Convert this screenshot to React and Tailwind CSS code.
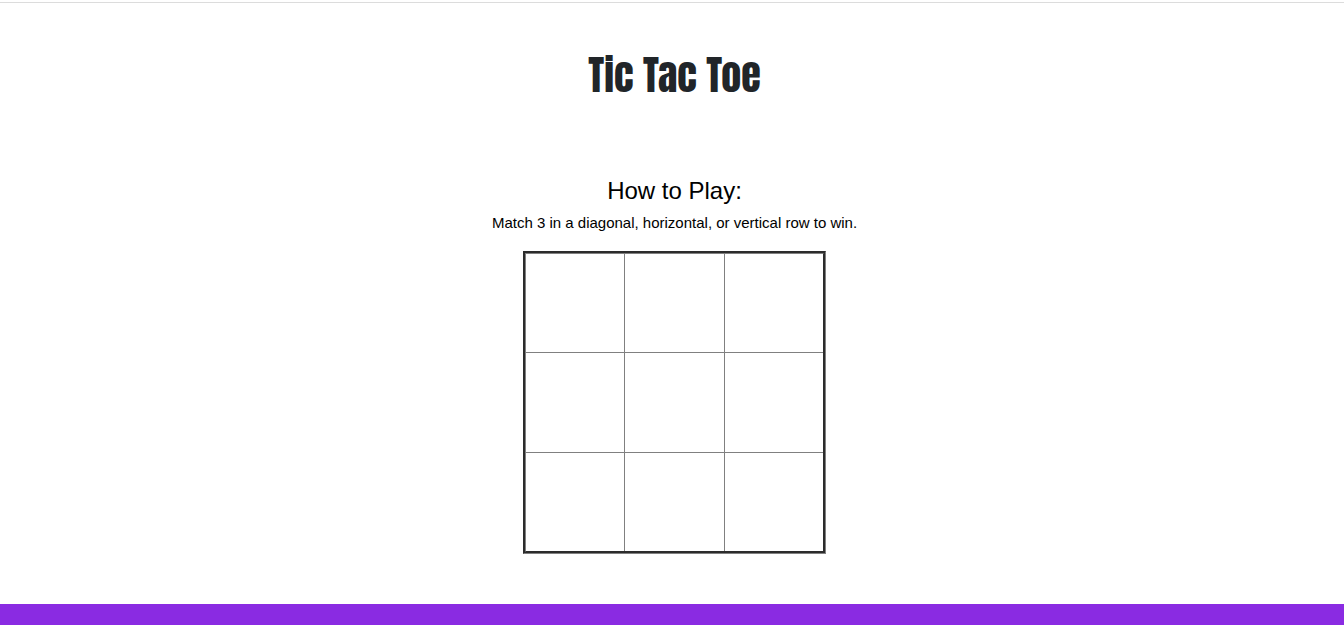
import { useState } from "react";

const LINES = [
  [0, 1, 2], [3, 4, 5], [6, 7, 8],
  [0, 3, 6], [1, 4, 7], [2, 5, 8],
  [0, 4, 8], [2, 4, 6],
];

const EDGES = [
  "border-r border-b", "border-r border-b", "border-b",
  "border-r border-b", "border-r border-b", "border-b",
  "border-r", "border-r", "",
];

function Board() {
  const [squares, setSquares] = useState(Array(9).fill(""));
  const won = LINES.some(([a, b, c]) => squares[a] && squares[a] === squares[b] && squares[a] === squares[c]);

  function play(index) {
    if (won || squares[index]) return;
    const mark = squares.filter(Boolean).length % 2 === 0 ? "X" : "O";
    setSquares(squares.map((value, i) => (i === index ? mark : value)));
  }

  return (
    <div className="grid grid-cols-[99px_100px_98px] grid-rows-[99px_100px_98px] border-3 border-[gray] [border-style:groove]">
      {squares.map((value, i) => (
        <button
          key={i}
          type="button"
          aria-label={`Square ${i + 1}`}
          onClick={() => play(i)}
          className={`border-[gray] text-6xl ${EDGES[i]}`}
        >
          {value}
        </button>
      ))}
    </div>
  );
}

export default function App() {
  return (
    <div className="flex min-h-screen flex-col bg-white font-['Liberation_Sans',Arial,sans-serif] text-black">
      <main className="mt-0.5 flex flex-col items-center border-t border-[#dcdcdc] pl-[5px] pb-[50px]">
        <h1 className="mt-12 font-[Impact,Anton,'Liberation_Sans_Narrow','Liberation_Sans',sans-serif] text-[40px] leading-[48px] font-medium text-[#212529]">
          Tic Tac Toe
        </h1>
        <h2 className="mt-[76px] text-2xl leading-8">How to Play:</h2>
        <p className="mt-1 mb-4 text-[15px] leading-6">
          Match 3 in a diagonal, horizontal, or vertical row to win.
        </p>
        <Board />
      </main>
      <footer className="min-h-5 grow bg-[#8a2be2]" />
    </div>
  );
}
